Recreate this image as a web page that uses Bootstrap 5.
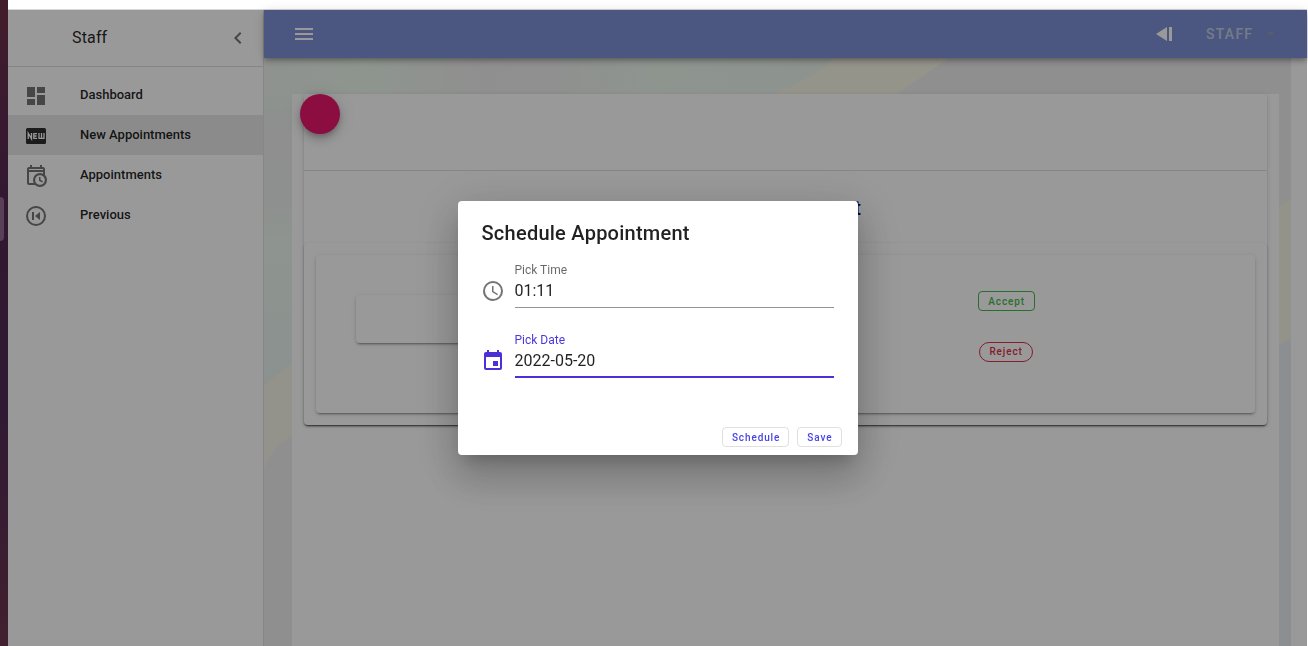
<!DOCTYPE html>
<html lang="en">
<head>
<meta charset="utf-8">
<title>Staff</title>
<link href="https://cdn.jsdelivr.net/npm/bootstrap@5.3.0/dist/css/bootstrap.min.css" rel="stylesheet">
<style>
body{font-family:Roboto,"Liberation Sans",sans-serif;color:rgba(0,0,0,.87);background:#fff;height:646px;overflow:hidden}
.desk{width:8px;background:linear-gradient(#421c2a 0,#3a1a30 110px,#301830 220px,#301a33 420px,#42202f 646px)}
.dock{top:197px;left:0;width:4px;height:44px;background:#584058;border-radius:0 4px 4px 0}
.chrome{height:10px;border-bottom:1px solid #d6d6d9}
.screen{margin-right:1px;min-width:0}
.side{width:256px;border-right:1px solid #e0e0e0;background:#fff}
.side-head{height:57px;border-bottom:1px solid #e0e0e0;padding:0 13px 0 64px;font-size:16px;letter-spacing:.15px}
.side-nav{padding-top:8px}
.side-nav a{height:40px;padding:0 18px 0 16px;font-size:13px;font-weight:500;color:rgba(0,0,0,.87);text-decoration:none}
.side-nav a.active{background:#e8e8e8}
.side-nav svg{width:24px;height:24px;fill:#757575;margin:2px 32px 0 0}
.side-nav span{line-height:20px}
.topbar{height:48px;background:#7f91d8;box-shadow:0 2px 4px -1px rgba(0,0,0,.2),0 4px 5px rgba(0,0,0,.14),0 1px 10px rgba(0,0,0,.12);padding:0 32px 0 28px;z-index:2}
.topbar svg{fill:#fff}
.who{font-size:14px;font-weight:500;letter-spacing:1.25px;color:#c2d0e2;margin-left:33px;width:61px}
.stage{padding:36px 28px 0}
.stage>.art{inset:0 16px 0 0}
.art svg{width:1027px;height:588px;display:block}
.sheet{background:#fff;padding:0 12px;position:relative}
.panel{border-radius:4px;background:#fff}
.elev{box-shadow:0 3px 1px -2px rgba(0,0,0,.2),0 2px 2px rgba(0,0,0,.14),0 1px 5px rgba(0,0,0,.12)}
.outer{height:331px}
.strip{height:77px;border-bottom:1px solid #e0e0e0}
.fab{width:40px;height:40px;background:#e9166b;margin-left:-4px;box-shadow:0 3px 5px -1px rgba(0,0,0,.2),0 6px 10px rgba(0,0,0,.14),0 1px 18px rgba(0,0,0,.12)}
.heading{height:72px;padding:25px 406px 0 0;font-size:20px;font-weight:500;line-height:24px;color:#000060}
.list-box{height:182px;padding:12px;box-shadow:0 2px 1px -1px rgba(0,0,0,.2),0 1px 1px rgba(0,0,0,.14),0 1px 3px rgba(0,0,0,.2)}
.entry{height:158px;padding:37px 220px 0 40px}
.blank{width:300px;height:48px;margin-top:3px}
.tag-btn{height:20px;line-height:18px;padding:0 9px;font-size:10px;font-weight:500;letter-spacing:.89px;border-radius:4px}
.acts{margin-top:-1px}
.ok{color:#46b84c;border-color:#46b84c;padding-top:1px}
.no{color:#e03048;border-color:#e03048;border-radius:10px;margin:31px 1px 0 0}
.veil{left:8px;top:10px;right:1px;bottom:0;background:rgba(0,0,0,.4);z-index:5;padding-top:191px}
.dialog-box{width:400px;height:254px;background:#fff;border-radius:4px;box-shadow:0 11px 15px -7px rgba(0,0,0,.2),0 24px 38px 3px rgba(0,0,0,.14),0 9px 46px 8px rgba(0,0,0,.12);padding:16px 16px 8px 24px}
.dialog-box h1{font-size:20px;font-weight:500;letter-spacing:.25px;line-height:32px;margin:0}
.field{margin-right:8px;height:70px;padding-top:11px}
.field svg{width:24px;height:24px;margin:19px 9.5px 0 -.5px;fill:#757575}
.field label{font-size:12px;line-height:20px;color:rgba(0,0,0,.6);display:block}
.field .val{height:28px;line-height:22px;font-size:16px;border-bottom:1px solid #949494}
.field.on svg{fill:#4c2fd6}.field.on label{color:#4a3ada}
.field.on .val{border-bottom:2px solid #4c2fd6}
.dlg{color:#4844e4;border:1px solid #e0e0e0;padding:1px 8px 0 9px}
</style>
</head>
<body>
<div class="d-flex h-100">
  <div class="desk position-relative flex-shrink-0"><div class="dock position-absolute"></div></div>
  <div class="screen d-flex flex-column flex-grow-1">
    <div class="chrome flex-shrink-0"></div>
    <div class="d-flex flex-grow-1">
      <aside class="side flex-shrink-0">
        <div class="side-head d-flex align-items-center justify-content-between"><span>Staff</span>
          <svg width="24" height="24" viewBox="0 0 24 24" fill="#757575"><path d="M15.41 16.58 10.83 12l4.58-4.59L14 6l-6 6 6 6z"/></svg></div>
        <nav class="side-nav">
          <a href="#" class="d-flex align-items-center"><svg viewBox="0 0 24 24"><path d="M13 3v6h8V3m-8 18h8V11h-8M3 21h8v-6H3m0-2h8V3H3z"/></svg><span>Dashboard</span></a>
          <a href="#" class="d-flex align-items-center active"><svg viewBox="0 0 24 24"><rect x="2" y="4" width="20" height="16" rx="1.5" fill="#303030"/><path d="M4.200 15V9.200l3.300 5.600V9M13 9.600H9.800v4.800H13M9.800 12h2.800M15 9v5.400h5V9M17.500 9v5.400" fill="none" stroke="#fff" stroke-width="1.300"/></svg><span>New Appointments</span></a>
          <a href="#" class="d-flex align-items-center"><svg viewBox="0 0 24 24"><path d="M15 13h1.5v2.82l2.44 1.41-.75 1.3L15 16.69V13m4-5H5v11h4.67c-.43-.91-.67-1.93-.67-3a7 7 0 0 1 7-7c1.07 0 2.09.24 3 .67V8M5 21a2 2 0 0 1-2-2V5c0-1.11.89-2 2-2h1V1h2v2h8V1h2v2h1a2 2 0 0 1 2 2v6.1c1.24 1.26 2 2.99 2 4.9a7 7 0 0 1-7 7c-1.91 0-3.64-.76-4.9-2H5m11-9.850A4.850 4.850 0 0 0 11.150 16c0 2.680 2.170 4.850 4.850 4.850A4.850 4.850 0 0 0 20.850 16c0-2.680-2.170-4.850-4.850-4.850z"/><path fill="#fff" d="M5 5h14v1H5z"/></svg><span>Appointments</span></a>
          <a href="#" class="d-flex align-items-center"><svg viewBox="0 0 24 24"><circle cx="12" cy="12" r="9" fill="none" stroke="#757575" stroke-width="2"/><path d="M8 8h2v8H8zM16 8v8l-5-4z"/></svg><span>Previous</span></a>
        </nav>
      </aside>
      <main class="d-flex flex-column flex-grow-1">
        <header class="topbar d-flex align-items-center position-relative flex-shrink-0">
          <svg width="24" height="24" viewBox="0 0 24 24"><path d="M3 6h18v2H3V6m0 5h18v2H3v-2m0 5h18v2H3z"/></svg>
          <svg class="ms-auto" width="18" height="16" viewBox="0 0 18 16"><path d="M1 8 12 1v14zM14 1h3v14h-3z"/></svg>
          <span class="who">STAFF</span>
          <svg width="8" height="4" viewBox="0 0 8 4"><path d="M0 0h7L3.500 4z" style="fill:#929bb0"/></svg>
        </header>
        <div class="stage position-relative flex-grow-1">
          <div class="art position-absolute overflow-hidden"><svg viewBox="0 0 1027 588">
            <defs><linearGradient id="mint" x2="1" y2="0"><stop offset="0" stop-color="#eef4ef"/><stop offset=".18" stop-color="#edf9ee"/><stop offset=".38" stop-color="#efefee"/><stop offset=".52" stop-color="#eef1ee"/><stop offset=".68" stop-color="#edf8ee"/><stop offset="1" stop-color="#ebf4ed"/></linearGradient>
            <linearGradient id="leaf" x1="0" y1="0" x2="0" y2="1"><stop offset="0" stop-color="#ebf5ed"/><stop offset=".15" stop-color="#eee"/><stop offset=".32" stop-color="#edeeee"/><stop offset=".5" stop-color="#edf7ee"/><stop offset="1" stop-color="#e8f2ee"/></linearGradient></defs>
            <path fill="#eee" d="M0 0h1027v588H0z"/>
            <path fill="url(#mint)" d="M0 0h571Q545 23 508 36H0z"/>
            <path fill="url(#leaf)" d="M0 36h28v269L0 327z"/>
            <path fill="#f7f7e8" d="M571 0h113l-50 36H508Q545 23 571 0z"/>
            <path fill="#f5f5e8" d="M0 327l28-22v72Q8 390 0 410z"/>
            <path fill="#f5f5e6" d="M1015 148l12-7v140l-12 6z"/>
            <path fill="#e9eff3" d="M1015 287l12-6v307h-12z"/>
          </svg></div>
          <div class="sheet h-100">
            <div class="panel outer elev">
              <div class="strip"><div class="fab rounded-circle"></div></div>
              <div class="heading text-end">t</div>
              <div class="panel list-box">
                <div class="panel entry elev d-flex justify-content-between">
                  <div class="panel blank elev"></div>
                  <div class="acts d-flex flex-column align-items-center"><button class="btn tag-btn ok">Accept</button><button class="btn tag-btn no">Reject</button></div>
                </div>
              </div>
            </div>
          </div>
        </div>
      </main>
    </div>
  </div>
</div>
<div class="veil position-fixed">
  <div class="dialog-box mx-auto d-flex flex-column" role="dialog">
    <h1>Schedule Appointment</h1>
    <div class="field d-flex"><svg viewBox="0 0 24 24"><path d="M12 20a8 8 0 0 0 8-8 8 8 0 0 0-8-8 8 8 0 0 0-8 8 8 8 0 0 0 8 8m0-18a10 10 0 0 1 10 10 10 10 0 0 1-10 10C6.470 22 2 17.500 2 12A10 10 0 0 1 12 2m.5 5v5.250l4.500 2.670-.75 1.230L11 13V7h1.500z"/></svg>
      <div class="flex-grow-1"><label>Pick Time</label><div class="val">01:11</div></div></div>
    <div class="field on d-flex"><svg viewBox="0 0 24 24"><path d="M19 19H5V8h14m-3-7v2H8V1H6v2H5c-1.110 0-2 .89-2 2v14a2 2 0 0 0 2 2h14a2 2 0 0 0 2-2V5a2 2 0 0 0-2-2h-1V1m-1 11h-5v5h5z"/></svg>
      <div class="flex-grow-1"><label>Pick Date</label><div class="val">2022-05-20</div></div></div>
    <div class="d-flex justify-content-end gap-2 mt-auto"><button class="btn tag-btn dlg">Schedule</button><button class="btn tag-btn dlg">Save</button></div>
  </div>
</div>
<script src="https://cdn.jsdelivr.net/npm/bootstrap@5.3.0/dist/js/bootstrap.bundle.min.js"></script>
</body>
</html>
